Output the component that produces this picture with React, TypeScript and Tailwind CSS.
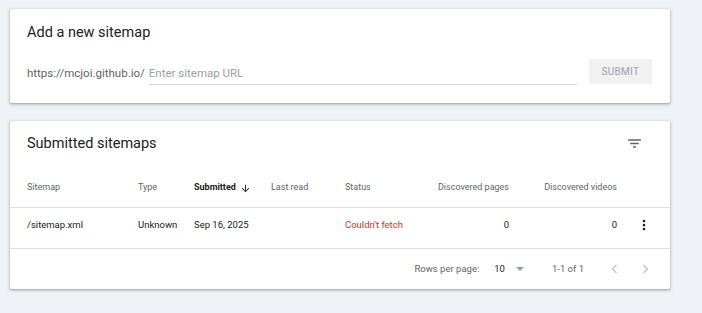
const cols = [
  "w-[111px]",
  "w-[56px]",
  "w-[77px]",
  "w-[74px]",
  "w-[80px]",
  "w-[84px] text-right",
  "w-[108px] text-right",
];

function FilterIcon() {
  return (
    <svg width="17" height="17" viewBox="0 0 24 24" fill="#5f6368">
      <path d="M10 18h4v-2h-4v2zM3 6v2h18V6H3zm3 7h12v-2H6v2z" />
    </svg>
  );
}

function MoreIcon() {
  return (
    <svg width="16" height="16" viewBox="0 0 24 24" fill="#202124">
      <path d="M12 8c1.1 0 2-.9 2-2s-.9-2-2-2-2 .9-2 2 .9 2 2 2zm0 2c-1.1 0-2 .9-2 2s.9 2 2 2 2-.9 2-2-.9-2-2-2zm0 6c-1.1 0-2 .9-2 2s.9 2 2 2 2-.9 2-2-.9-2-2-2z" />
    </svg>
  );
}

function ArrowDown() {
  return (
    <svg width="11" height="11" viewBox="0 0 24 24" fill="#202124">
      <path d="M20 12l-1.41-1.41L13 16.17V4h-2v12.17l-5.58-5.59L4 12l8 8 8-8z" />
    </svg>
  );
}

function Chevron({ dir }: { dir: "left" | "right" }) {
  return (
    <svg width="16" height="16" viewBox="0 0 16 16" fill="none" stroke="#bdc1c6" strokeWidth="1.2">
      {dir === "left" ? <path d="M10.5 4L6.5 8l4 4" /> : <path d="M5.5 4l4 4-4 4" />}
    </svg>
  );
}

export default function App() {
  return (
    <main className="min-h-screen bg-[#eef1f6] pl-[10px] pt-[9px] font-['Roboto',sans-serif] text-[#202124]">
      <section className="w-[660px] rounded-[2px] bg-white shadow-[0_1px_2px_rgba(60,64,67,0.3),0_1px_3px_1px_rgba(60,64,67,0.15)]">
        <h2 className="h-[46px] pl-[17px] pt-[15px] text-[14.5px] leading-[18px]">Add a new sitemap</h2>
        <div className="flex h-[48px] items-start pl-[17px] pt-[4px]">
          <span className="pt-[6px] text-[11.5px] leading-[16px] text-[#5f6368]">https://mcjoi.github.io/</span>
          <div className="ml-[4px] w-[428px] border-b border-[#dadce0] pb-[3px] pt-[6px] text-[11.5px] leading-[16px] text-[#9aa0a6]">
            Enter sitemap URL
          </div>
          <button className="ml-[12px] h-[25px] w-[63px] rounded-[2px] bg-[#f1f1f1] text-[10px] tracking-[0.3px] text-[#9aa0a6]">
            SUBMIT
          </button>
        </div>
      </section>

      <section className="mt-[18px] w-[660px] rounded-[2px] bg-white shadow-[0_1px_2px_rgba(60,64,67,0.3),0_1px_3px_1px_rgba(60,64,67,0.15)]">
        <div className="flex h-[44px] items-center justify-between pl-[17px] pr-[27px] pt-[1px]">
          <h2 className="text-[14.5px] leading-[18px]">Submitted sitemaps</h2>
          <FilterIcon />
        </div>
        <div className="flex h-[43px] items-center border-b border-[#e0e0e0] pl-[17px] pt-[4px] text-[9px] text-[#5f6368]">
          <div className={cols[0]}>Sitemap</div>
          <div className={cols[1]}>Type</div>
          <div className={`${cols[2]} flex items-center gap-[4px] font-bold text-[#202124]`}>
            Submitted <ArrowDown />
          </div>
          <div className={cols[3]}>Last read</div>
          <div className={cols[4]}>Status</div>
          <div className={cols[5]}>Discovered pages</div>
          <div className={cols[6]}>Discovered videos</div>
        </div>
        <div className="flex h-[41px] items-center border-b border-[#e0e0e0] pb-[6px] pl-[17px] text-[9.5px] text-[#202124]">
          <div className={cols[0]}>/sitemap.xml</div>
          <div className={cols[1]}>Unknown</div>
          <div className={cols[2]}>Sep 16, 2025</div>
          <div className={cols[3]}></div>
          <div className={`${cols[4]} text-[#d93025]`}>Couldn't fetch</div>
          <div className={cols[5]}>0</div>
          <div className={cols[6]}>0</div>
          <div className="flex flex-1 justify-center pl-[1px]">
            <MoreIcon />
          </div>
        </div>
        <div className="flex h-[40px] items-center justify-end pr-[16px] text-[9.5px] text-[#5f6368]">
          <span>Rows per page:</span>
          <span className="ml-[15px] text-[#202124]">10</span>
          <span className="ml-[11px] h-0 w-0 border-x-[4px] border-t-[4px] border-x-transparent border-t-[#9aa0a6]" />
          <span className="ml-[28px]">1-1 of 1</span>
          <span className="ml-[22px] flex"><Chevron dir="left" /></span>
          <span className="ml-[16px] flex"><Chevron dir="right" /></span>
        </div>
      </section>
    </main>
  );
}
